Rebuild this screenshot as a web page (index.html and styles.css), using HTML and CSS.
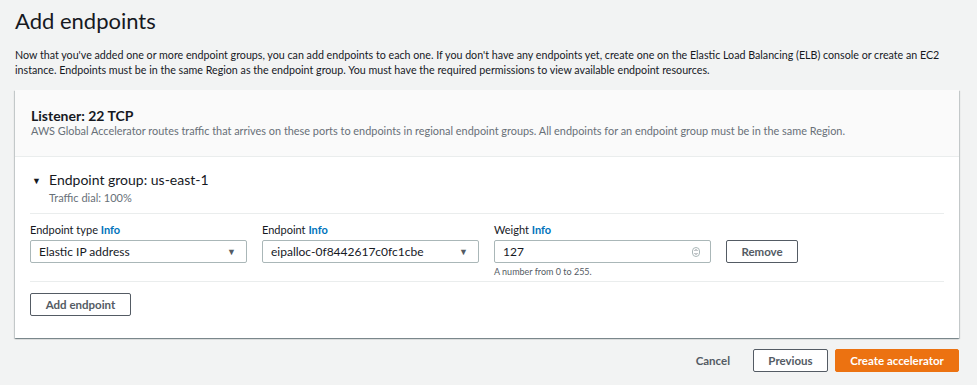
FILE: index.html
```html
<!DOCTYPE html>
<html lang="en">

<head>
    <meta charset="UTF-8">
    <meta name="viewport" content="width=device-width, initial-scale=1.0">
    <title>Add endpoints</title>
    <link rel="stylesheet" href="styles.css">
</head>

<body>

    <h1 class="page-title">Add endpoints</h1>
    <p class="page-desc">Now that you've added one or more endpoint groups, you can add endpoints to each one. If you don't have any endpoints yet, create one on the Elastic Load Balancing (ELB) console or create an EC2 instance. Endpoints must be in the same Region as the endpoint group. You must have the required permissions to view available endpoint resources.</p>

    <div class="card">
        <div class="card-header">
            <h2>Listener: 22 TCP</h2>
            <p>AWS Global Accelerator routes traffic that arrives on these ports to endpoints in regional endpoint groups. All endpoints for an endpoint group must be in the same Region.</p>
        </div>
        <div class="card-body">
            <div class="group-head">
                <div class="group-title"><span class="caret">&#9660;</span>Endpoint group: us-east-1</div>
                <div class="group-sub">Traffic dial: 100%</div>
            </div>

            <div class="endpoint-row">
                <div class="field">
                    <label>Endpoint type <a href="#">Info</a></label>
                    <div class="select">
                        <span>Elastic IP address</span>
                        <span class="arrow">&#9660;</span>
                    </div>
                </div>
                <div class="field">
                    <label>Endpoint <a href="#">Info</a></label>
                    <div class="select">
                        <span>eipalloc-0f8442617c0fc1cbe</span>
                        <span class="arrow">&#9660;</span>
                    </div>
                </div>
                <div class="field">
                    <label>Weight <a href="#">Info</a></label>
                    <div class="select">
                        <span>127</span>
                        <svg class="spin" width="8" height="10" viewBox="0 0 8 10">
                            <rect x="0.5" y="0.5" width="7" height="9" rx="3.5" fill="none" stroke="#aab7b8" />
                            <path d="M2.5 4 L4 2.5 L5.5 4 M2.5 6 L4 7.5 L5.5 6" fill="none" stroke="#687078" stroke-width="0.8" />
                        </svg>
                    </div>
                    <div class="hint">A number from 0 to 255.</div>
                </div>
                <button class="btn btn-remove">Remove</button>
            </div>

            <div class="add-row">
                <button class="btn">Add endpoint</button>
            </div>
        </div>
    </div>

    <div class="footer">
        <button class="btn-link">Cancel</button>
        <button class="btn btn-prev">Previous</button>
        <button class="btn btn-primary">Create accelerator</button>
    </div>

</body>

</html>
```

FILE: styles.css
```css
body {
    margin: 0;
    padding: 0 18px 0 15px;
    background: #f2f3f3;
    font-family: Lato, sans-serif;
    color: #16191f;
}

.page-title {
    font-size: 22px;
    font-weight: 400;
    margin: 0;
    padding-top: 5px;
    line-height: 32px;
}

.page-desc {
    font-size: 10.7px;
    line-height: 15px;
    margin: 10px 0 0;
}

.card {
    margin-top: 13px;
    background: #fff;
    box-shadow: 0 1px 1px 0 rgba(0, 28, 36, 0.3), 1px 1px 1px 0 rgba(0, 28, 36, 0.15), -1px 1px 1px 0 rgba(0, 28, 36, 0.15);
}

.card-header {
    background: #fafafa;
    border-bottom: 1px solid #eaeded;
    padding: 18px 16px 18px;
}

.card-header h2 {
    font-size: 14px;
    font-weight: 700;
    margin: 0;
    line-height: 16px;
}

.card-header p {
    font-size: 10.9px;
    color: #687078;
    margin: 0;
    line-height: 14px;
}

.card-body {
    padding: 0 15px 22px;
}

.group-head {
    padding: 13px 0 8px 2px;
    border-bottom: 1px solid #eaeded;
}

.group-title {
    font-size: 14px;
    line-height: 20px;
}

.caret {
    font-size: 9px;
    display: inline-block;
    width: 17px;
    vertical-align: 1px;
}

.group-sub {
    font-size: 11px;
    color: #687078;
    padding-left: 17px;
    line-height: 14px;
}

.endpoint-row {
    display: flex;
    align-items: flex-start;
    gap: 15px;
    padding: 8px 0 3px;
    border-bottom: 1px solid #eaeded;
}

.field {
    width: 217px;
}

.field label {
    display: block;
    font-size: 11px;
    line-height: 16px;
    margin-bottom: 2px;
}

.field label a {
    color: #0073bb;
    font-weight: 700;
    text-decoration: none;
}

.select {
    box-sizing: border-box;
    height: 23px;
    border: 1px solid #aab7b8;
    border-radius: 2px;
    display: flex;
    align-items: center;
    justify-content: space-between;
    padding: 0 10px 0 8px;
    font-size: 12px;
    background: #fff;
}

.arrow {
    font-size: 9px;
    color: #545b64;
}

.hint {
    font-size: 9px;
    color: #545b64;
    margin-top: 3px;
    line-height: 12px;
}

.btn {
    box-sizing: border-box;
    font-family: Lato, sans-serif;
    background: #fff;
    border: 1px solid #545b64;
    border-radius: 2px;
    color: #545b64;
    font-weight: 700;
    font-size: 11.5px;
    height: 23px;
    padding: 0 10px;
    white-space: nowrap;
    cursor: pointer;
}

.btn-remove {
    margin-top: 18px;
    width: 72px;
}

.add-row {
    padding-top: 11px;
}

.add-row .btn {
    width: 101px;
}

.footer {
    display: flex;
    justify-content: flex-end;
    align-items: center;
    gap: 7px;
    margin-top: 11px;
}

.btn-link {
    font-family: Lato, sans-serif;
    background: none;
    border: none;
    font-weight: 700;
    font-size: 11.5px;
    color: #545b64;
    padding: 0 16px;
}

.btn-prev {
    width: 75px;
}

.btn-primary {
    background: #ec7211;
    border-color: #ec7211;
    color: #fff;
    width: 124px;
}
```
